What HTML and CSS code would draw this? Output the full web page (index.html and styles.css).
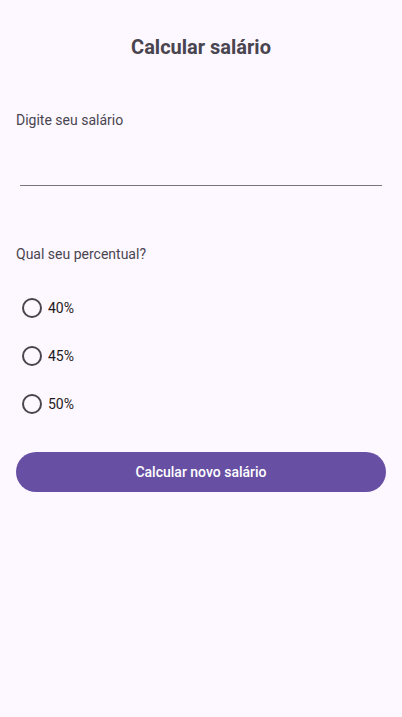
FILE: index.html
```html
<!DOCTYPE html>
<html lang="pt-BR">
<head>
<meta charset="utf-8">
<title>Calcular salário</title>
<link rel="stylesheet" href="styles.css">
</head>
<body>
<main class="page">
  <h1 class="title">Calcular salário</h1>
  <label class="label salary-label">Digite seu salário</label>
  <div class="field"><input class="input" type="text"></div>
  <p class="label percent-label">Qual seu percentual?</p>
  <div class="radios">
    <label class="radio"><span class="circle"></span><span class="radio-text">40%</span></label>
    <label class="radio"><span class="circle"></span><span class="radio-text">45%</span></label>
    <label class="radio"><span class="circle"></span><span class="radio-text">50%</span></label>
  </div>
  <button class="btn" type="button">Calcular novo salário</button>
</main>
</body>
</html>
```
FILE: styles.css
```css
html, body {
  margin: 0;
  padding: 0;
  background: #fdf7ff;
}
body {
  font-family: Roboto, "Noto Sans", sans-serif;
  color: #49454f;
  width: 402px;
  height: 717px;
}
.page {
  display: flex;
  flex-direction: column;
  padding: 0 16px;
}
.title {
  margin: 34px 0 0;
  font-size: 20px;
  font-weight: 700;
  text-align: center;
  line-height: 26px;
  color: #49454f;
}
.label {
  font-size: 14px;
  line-height: 20px;
  margin: 0;
  color: #49454f;
}
.salary-label {
  margin-top: 50px;
}
.field {
  margin: 0 4px;
  height: 55px;
  border-bottom: 1px solid #79747e;
}
.input {
  display: none;
}
.percent-label {
  margin-top: 58px;
}
.radios {
  display: flex;
  flex-direction: column;
  margin-top: 34px;
  gap: 28px;
}
.radio {
  display: flex;
  align-items: center;
  height: 20px;
  gap: 6px;
  padding-left: 6px;
  font-size: 14px;
  color: #1d1b20;
}
.circle {
  width: 16px;
  height: 16px;
  border: 2px solid #49454f;
  border-radius: 50%;
}
.btn {
  margin-top: 38px;
  height: 40px;
  border: none;
  border-radius: 20px;
  background: #6750a4;
  color: #ffffff;
  font-family: Roboto, "Noto Sans", sans-serif;
  font-size: 14px;
  font-weight: 500;
}
```
